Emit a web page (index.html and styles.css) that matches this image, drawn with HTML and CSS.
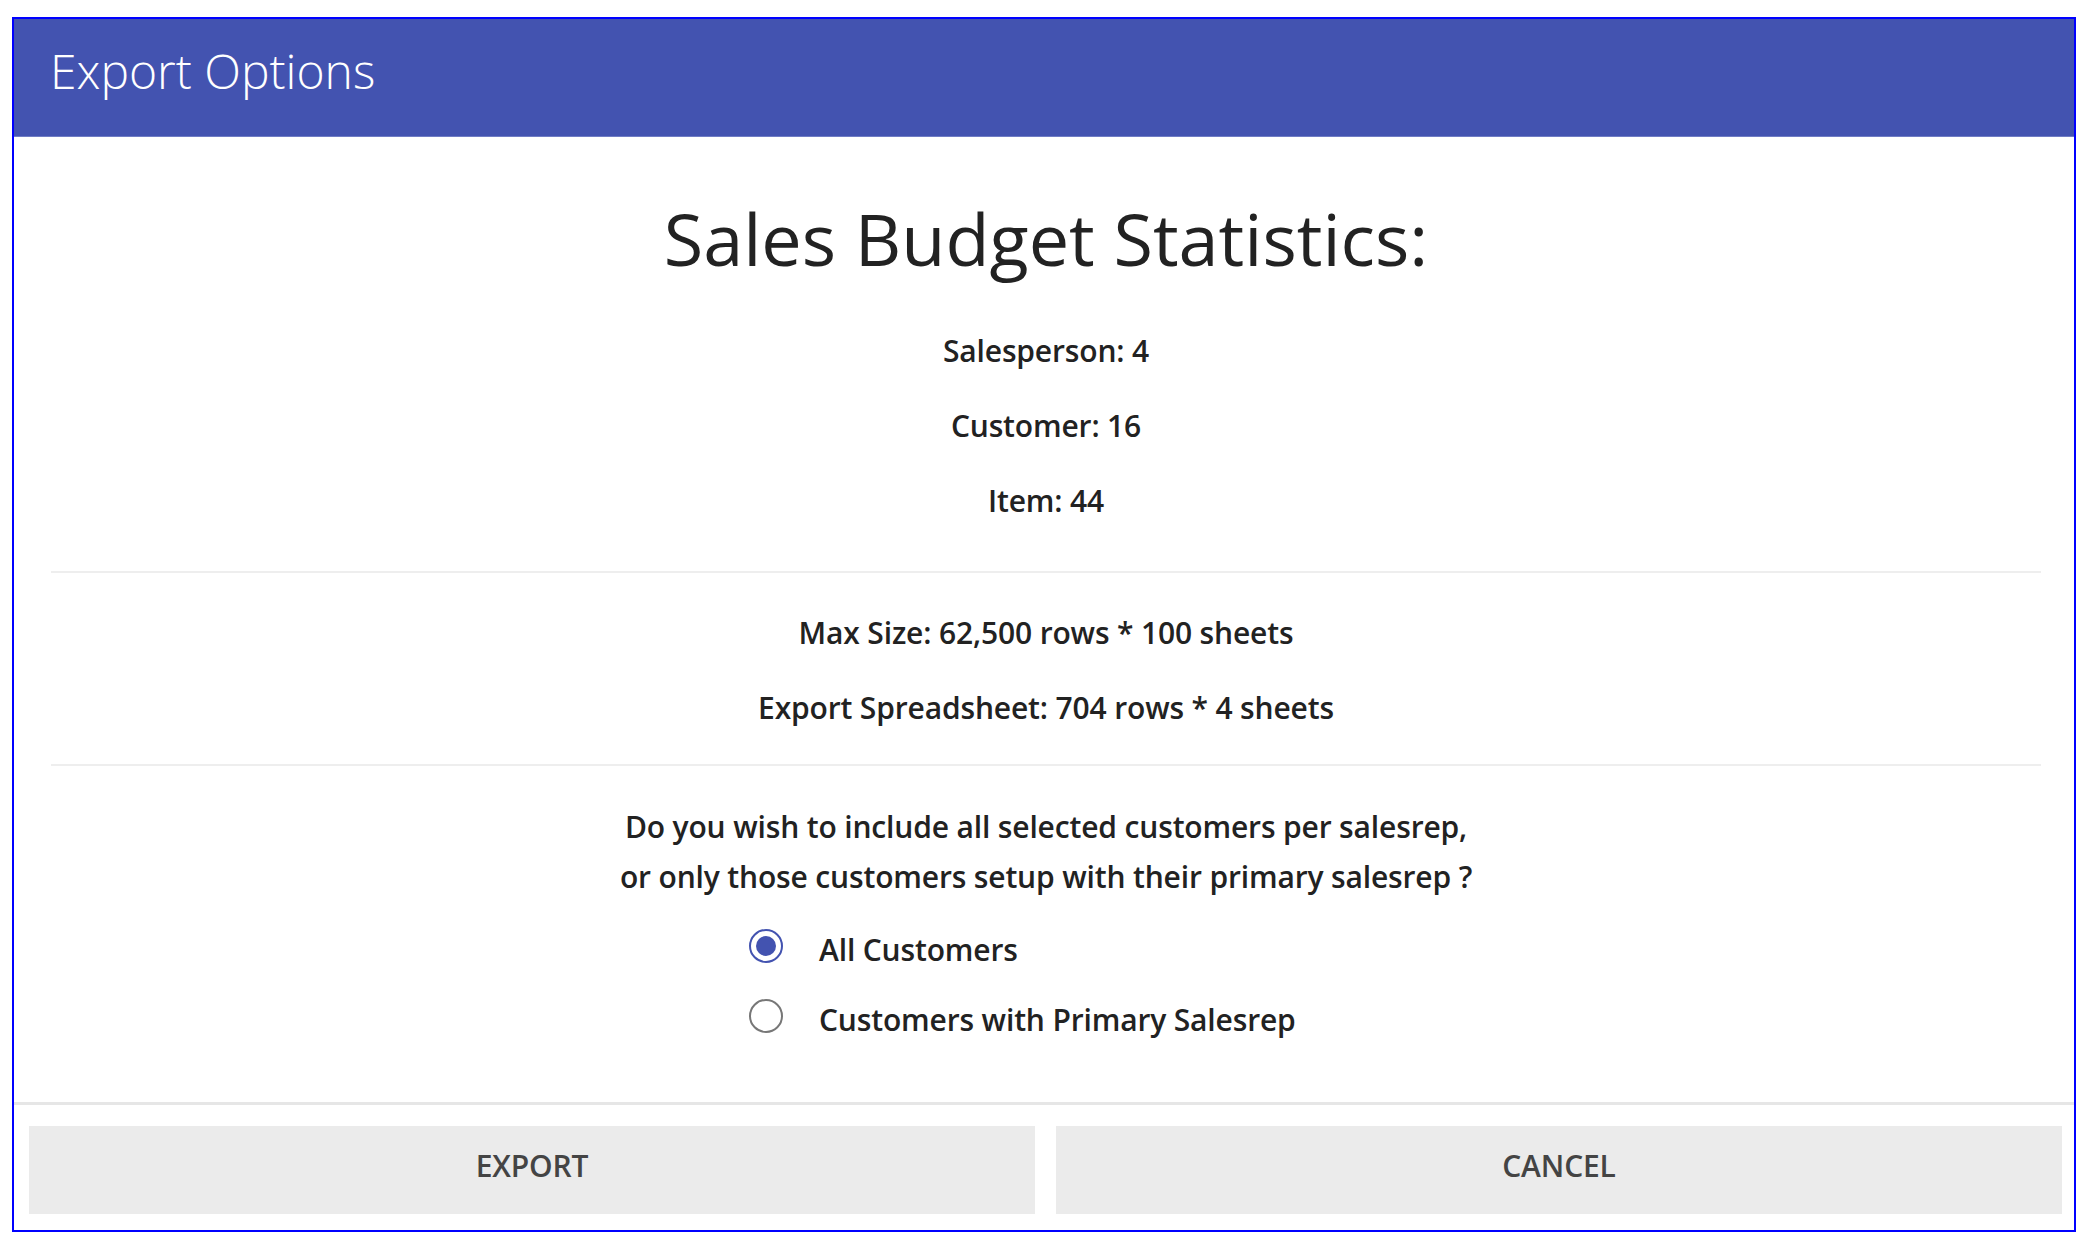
FILE: index.html
```html
<!DOCTYPE html>
<html lang="en">
<head>
    <meta charset="UTF-8">
    <meta name="viewport" content="width=device-width, initial-scale=1.0">
    <title>Export Options</title>
    <link rel="stylesheet" href="styles.css">
</head>

<body>

    <div class="dialog">
        <div class="dialog-header">
            <h1>Export Options</h1>
        </div>

        <div class="dialog-body">
            <h2>Sales Budget Statistics:</h2>

            <div class="stat-group">
                <p>Salesperson: 4</p>
                <p>Customer: 16</p>
                <p>Item: 44</p>
            </div>

            <hr class="divider">

            <div class="size-group">
                <p>Max Size: 62,500 rows * 100 sheets</p>
                <p>Export Spreadsheet: 704 rows * 4 sheets</p>
            </div>

            <hr class="divider">

            <p class="question">Do you wish to include all selected customers per salesrep,<br>or only those customers setup with their primary salesrep ?</p>

            <div class="radio-group">
                <label class="radio-row">
                    <input type="radio" name="customerMode" value="all" checked>
                    <span class="radio-mark"></span>
                    <span>All Customers</span>
                </label>
                <label class="radio-row">
                    <input type="radio" name="customerMode" value="primary">
                    <span class="radio-mark"></span>
                    <span>Customers with Primary Salesrep</span>
                </label>
            </div>
        </div>

        <div class="dialog-footer">
            <button type="button" class="footer-button">Export</button>
            <button type="button" class="footer-button">Cancel</button>
        </div>
    </div>

</body>
</html>
```

FILE: styles.css
```css
body {
    font-family: 'Open Sans', 'Noto Sans', sans-serif;
    background-color: #fff;
    margin: 0;
    padding: 17px 18px 0 12px;
    color: #222;
}

.dialog {
    border: 2px solid #0000ff;
    background-color: #fff;
    width: 2060px;
}

.dialog-header {
    background-color: #4353b0;
    height: 118px;
    padding: 0 36px;
    display: flex;
    align-items: center;
    border-bottom: 1px solid #6f7cc4;
    box-sizing: border-box;
}

.dialog-header h1 {
    margin: 0 0 14px 0;
    font-size: 48px;
    font-weight: 300;
    color: #fff;
    line-height: 1;
}

.dialog-body {
    padding: 51px 33px 0 37px;
    text-align: center;
}

.dialog-body h2 {
    margin: 0;
    font-size: 72px;
    font-weight: 400;
    line-height: 100px;
    color: #222;
}

.dialog-body p {
    margin: 0;
    font-size: 30px;
    font-weight: 600;
    letter-spacing: -0.15px;
    line-height: 75px;
}

.stat-group {
    margin-top: 25px;
}

.divider {
    border: none;
    border-top: 2px solid #eeeeee;
    margin: 0;
}

.stat-group + .divider {
    margin-top: 33px;
}

.size-group {
    margin-top: 22px;
    margin-bottom: 19px;
}

.dialog-body .question {
    line-height: 50px;
    margin-top: 36px;
}

.radio-group {
    width: 594px;
    margin: 12px auto 0 auto;
    text-align: left;
    padding-bottom: 48px;
}

.radio-row {
    display: flex;
    align-items: center;
    height: 70px;
    font-size: 30px;
    font-weight: 600;
    letter-spacing: -0.15px;
    cursor: pointer;
}

.radio-row input {
    display: none;
}

.radio-mark {
    width: 30px;
    height: 30px;
    border: 2px solid #777;
    border-radius: 50%;
    margin-right: 36px;
    margin-top: -6px;
    position: relative;
    flex-shrink: 0;
}

.radio-row input:checked + .radio-mark {
    border-color: #4353b0;
}

.radio-row input:checked + .radio-mark::after {
    content: "";
    position: absolute;
    left: 5px;
    top: 5px;
    width: 20px;
    height: 20px;
    border-radius: 50%;
    background-color: #4353b0;
}

.dialog-footer {
    border-top: 3px solid #e6e6e6;
    padding: 21px 12px 16px 15px;
    display: flex;
    gap: 21px;
}

.footer-button {
    flex: 1;
    height: 88px;
    padding: 0 0 9px 0;
    background-color: #ebebeb;
    border: none;
    font-family: 'Open Sans', 'Noto Sans', sans-serif;
    font-size: 30px;
    font-weight: 600;
    letter-spacing: -0.15px;
    color: #444;
    text-transform: uppercase;
    cursor: pointer;
}
```
